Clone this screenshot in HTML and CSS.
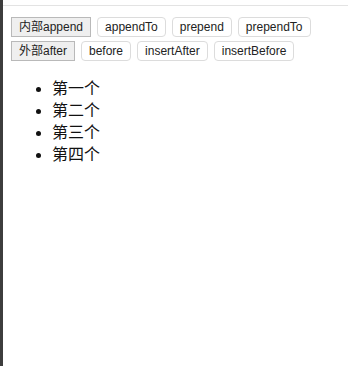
FILE: index.html
```html
<!DOCTYPE html>
<html>
<head>
<meta charset="utf-8">
<link rel="stylesheet" href="styles.css">
</head>
<body>
<div class="frame">
  <div class="strip"></div>
  <div class="main">
    <div class="topbar"></div>
    <div class="page">
      <div class="row">
        <button class="btn btn-head">内部append</button>
        <button class="btn">appendTo</button>
        <button class="btn">prepend</button>
        <button class="btn">prependTo</button>
      </div>
      <div class="row">
        <button class="btn btn-head">外部after</button>
        <button class="btn">before</button>
        <button class="btn">insertAfter</button>
        <button class="btn">insertBefore</button>
      </div>
      <ul class="list">
        <li>第一个</li>
        <li>第二个</li>
        <li>第三个</li>
        <li>第四个</li>
      </ul>
    </div>
  </div>
</div>
</body>
</html>
```
FILE: styles.css
```css
html, body {
  margin: 0;
  padding: 0;
  height: 100%;
  background: #ffffff;
}
.frame {
  display: flex;
  height: 366px;
  font-family: "Liberation Sans", "Noto Sans CJK SC", sans-serif;
}
.strip {
  width: 3px;
  background: #3d3d3d;
  flex: none;
}
.main {
  flex: 1;
  display: flex;
  flex-direction: column;
}
.topbar {
  height: 5px;
  border-bottom: 1px solid #e3e3e3;
  background: #ffffff;
}
.page {
  padding: 11px 8px 0 8px;
}
.row {
  display: flex;
  gap: 6px;
  margin-bottom: 4px;
}
.btn {
  height: 20px;
  padding: 0 7px;
  margin: 0;
  font-family: "Liberation Sans", "Noto Sans CJK SC", sans-serif;
  font-size: 12px;
  color: #222222;
  background: #ffffff;
  border: 1px solid #dcdcdc;
  border-radius: 4px;
  line-height: 18px;
}
.btn-head {
  padding: 0 7px;
  background: #efefef;
  border: 1px solid #b9b9b9;
  border-radius: 0;
}
.list {
  margin: 17px 0 0 0;
  padding-left: 41px;
  font-family: "Liberation Sans", "Noto Sans CJK SC", sans-serif;
  font-size: 16px;
  line-height: 22px;
  color: #111111;
}
.list li {
  height: 22px;
}
```
